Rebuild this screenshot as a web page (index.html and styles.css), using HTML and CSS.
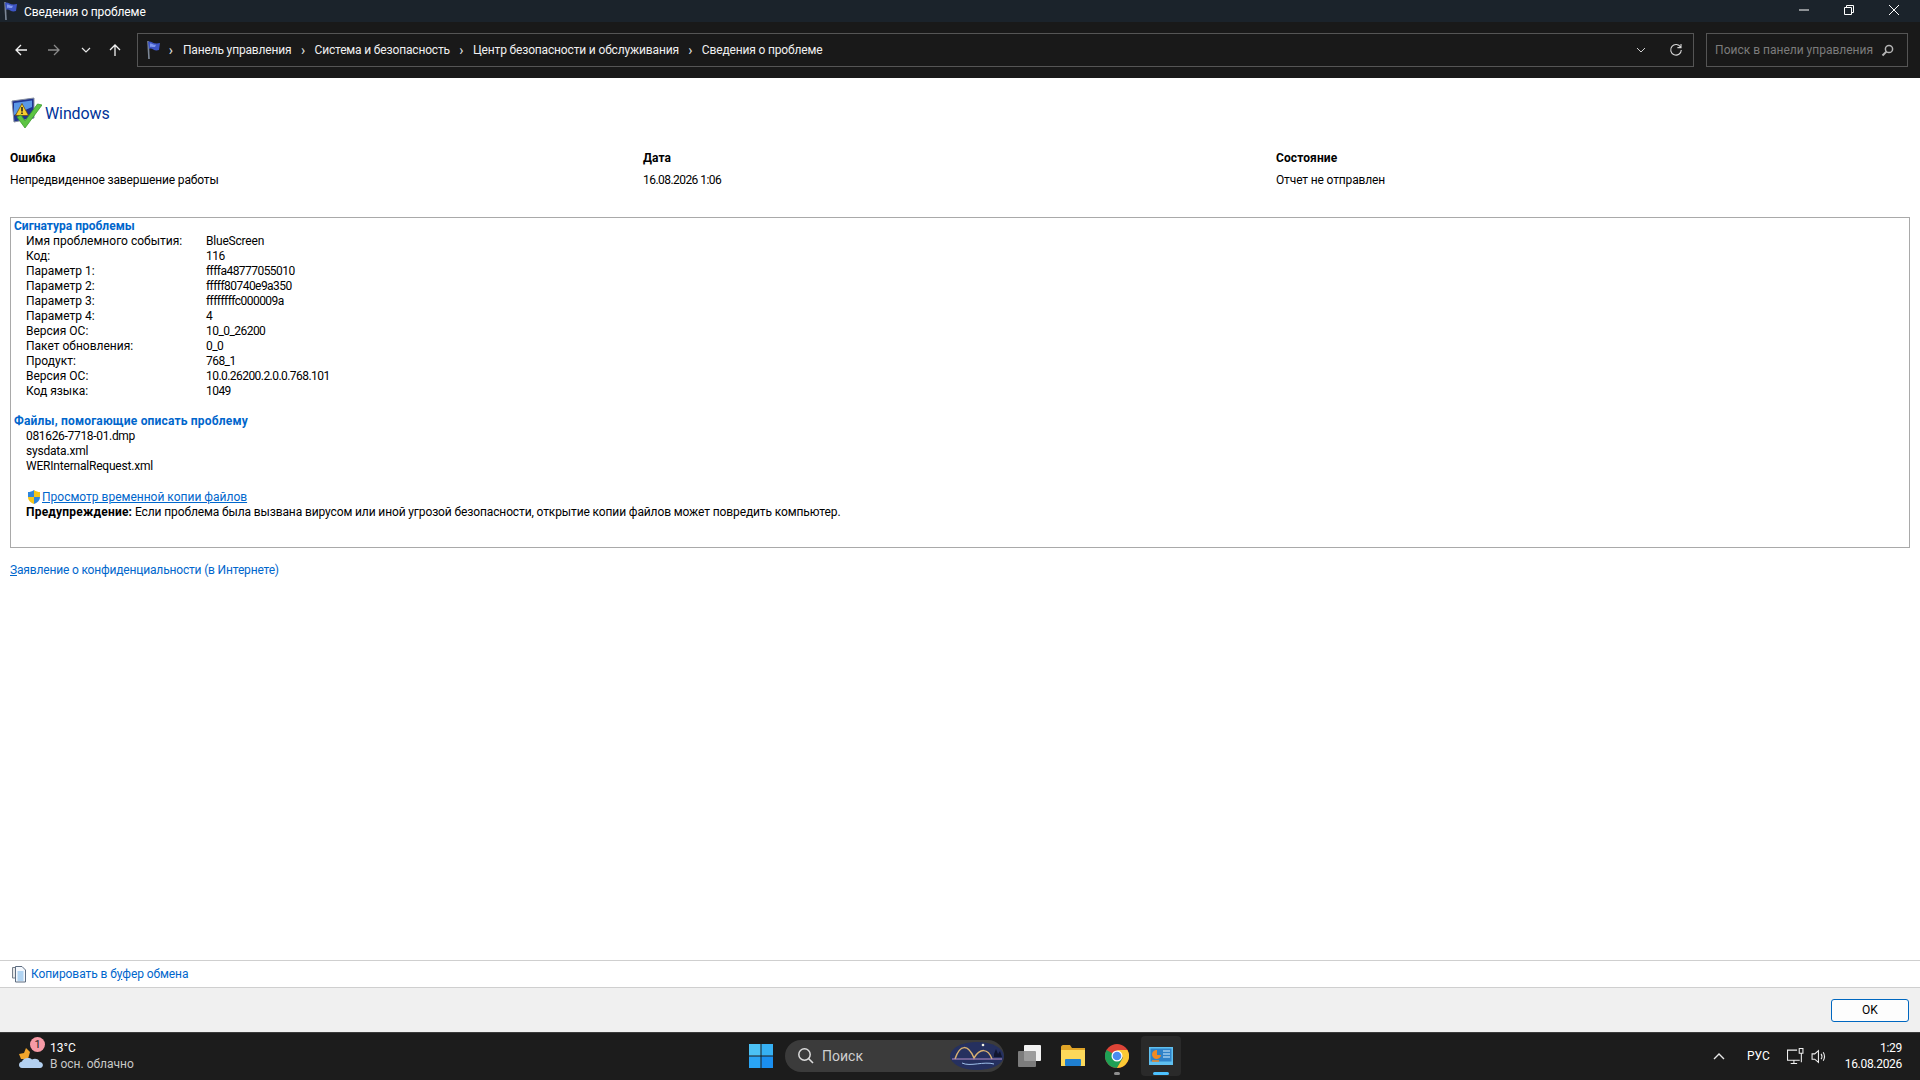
FILE: index.html
```html
<!DOCTYPE html>
<html lang="ru">

<head>
  <meta charset="UTF-8">
  <title>Сведения о проблеме</title>
  <link rel="stylesheet" href="styles.css">
</head>

<body>
  <div class="window">
    <!-- title bar -->
    <div class="titlebar">
      <svg class="flag-sm" width="16" height="20" viewBox="0 0 16 20">
        <path d="M3 1 L4 19" stroke="#7c8796" stroke-width="1.6" fill="none"/>
        <path d="M3 2 C6 0 8 5 15 3 L14 10 C9 12 7 7 4 9 Z" fill="#3d55c4"/>
        <path d="M5 3.500 C7 3 8 5 11 4.800 L10 7 C8 7.500 7 6 5 7 Z" fill="#7f97ee"/>
      </svg>
      <span class="title-text">Сведения о проблеме</span>
      <div class="win-btns">
        <svg width="12" height="12" viewBox="0 0 12 12"><path d="M1 6H11" stroke="#fff" fill="none"/></svg>
        <svg width="12" height="12" viewBox="0 0 12 12"><path d="M1.5 3.5H8.5V10.5H1.5Z M3.5 3.5V1.5H10.5V8.5H8.5" stroke="#fff" fill="none"/></svg>
        <svg width="12" height="12" viewBox="0 0 12 12"><path d="M1 1L11 11M11 1L1 11" stroke="#fff" fill="none"/></svg>
      </div>
    </div>

    <!-- navigation -->
    <div class="navbar">
      <div class="nav-btns">
        <svg width="14" height="14" viewBox="0 0 14 14"><path d="M13 7H2M7 2L2 7L7 12" stroke="#f2f2f2" stroke-width="1.3" fill="none"/></svg>
        <svg class="nav-forward" width="14" height="14" viewBox="0 0 14 14"><path d="M1 7H12M7 2L12 7L7 12" stroke="#8a8a8a" stroke-width="1.3" fill="none"/></svg>
        <svg class="nav-recent" width="10" height="10" viewBox="0 0 10 10"><path d="M1 3L5 7L9 3" stroke="#e6e6e6" stroke-width="1.2" fill="none"/></svg>
        <svg width="14" height="14" viewBox="0 0 14 14"><path d="M7 13V2M2 7L7 2L12 7" stroke="#f2f2f2" stroke-width="1.3" fill="none"/></svg>
      </div>
      <div class="address">
        <svg class="flag-addr" width="16" height="20" viewBox="0 0 16 20">
          <path d="M3 1 L4 19" stroke="#7c8796" stroke-width="1.6" fill="none"/>
          <path d="M3 2 C6 0 8 5 15 3 L14 10 C9 12 7 7 4 9 Z" fill="#3d55c4"/>
          <path d="M5 3.500 C7 3 8 5 11 4.800 L10 7 C8 7.500 7 6 5 7 Z" fill="#7f97ee"/>
        </svg>
        <span class="crumb-sep">›</span>
        <span class="crumb">Панель управления</span>
        <span class="crumb-sep">›</span>
        <span class="crumb">Система и безопасность</span>
        <span class="crumb-sep">›</span>
        <span class="crumb">Центр безопасности и обслуживания</span>
        <span class="crumb-sep">›</span>
        <span class="crumb">Сведения о проблеме</span>
        <div class="address-end">
          <svg width="10" height="10" viewBox="0 0 10 10"><path d="M1 3L5 7L9 3" stroke="#d0d0d0" fill="none"/></svg>
          <svg width="14" height="14" viewBox="0 0 14 14"><path d="M11.6 4.2A5.3 5.3 0 1 0 12.3 7M12 1V4.6H8.4" stroke="#d8d8d8" stroke-width="1.1" fill="none"/></svg>
        </div>
      </div>
      <div class="search-box">
        <span>Поиск в панели управления</span>
        <svg width="13" height="13" viewBox="0 0 13 13"><circle cx="8" cy="5" r="3.6" stroke="#b5b5b5" stroke-width="1.5" fill="none"/><path d="M5.4 7.6L1.5 11.5" stroke="#b5b5b5" stroke-width="2"/></svg>
      </div>
    </div>

    <!-- content -->
    <div class="content">
      <div class="app-head">
        <svg width="32" height="32" viewBox="0 0 32 32">
          <path d="M2 5L24 2L24 22L4 26Z" fill="#1f3390" stroke="#8790a0"/>
          <path d="M4 7L22 4.500L22 11L4 19Z" fill="#5a97e6"/>
          <path d="M12 7.500L18.500 19.500H5.500Z" fill="#f6cf2f" stroke="#6b4e10" stroke-width=".8"/>
          <path d="M12 11V15.500M12 16.500V18" stroke="#222" stroke-width="1.600"/>
          <path d="M7 21L15 32L32 9L27.500 8L15 25L11 19Z" fill="#5cc443" stroke="#3b9a2c" stroke-width=".8"/>
        </svg>
        <span class="app-name">Windows</span>
      </div>

      <div class="summary">
        <div>
          <div class="sum-title">Ошибка</div>
          <div class="sum-value">Непредвиденное завершение работы</div>
        </div>
        <div>
          <div class="sum-title">Дата</div>
          <div class="sum-value num">16.08.2026 1:06</div>
        </div>
        <div>
          <div class="sum-title">Состояние</div>
          <div class="sum-value">Отчет не отправлен</div>
        </div>
      </div>

      <div class="details">
        <div class="det-heading">Сигнатура проблемы</div>
        <div class="det-grid">
          <span>Имя проблемного события:</span><span class="latin">BlueScreen</span>
          <span>Код:</span><span class="num">116</span>
          <span>Параметр 1:</span><span class="num">ffffa48777055010</span>
          <span>Параметр 2:</span><span class="num">fffff80740e9a350</span>
          <span>Параметр 3:</span><span class="num">ffffffffc000009a</span>
          <span>Параметр 4:</span><span class="num">4</span>
          <span>Версия ОС:</span><span class="num">10_0_26200</span>
          <span>Пакет обновления:</span><span class="num">0_0</span>
          <span>Продукт:</span><span class="num">768_1</span>
          <span>Версия ОС:</span><span class="num">10.0.26200.2.0.0.768.101</span>
          <span>Код языка:</span><span class="num">1049</span>
        </div>
        <div class="det-heading det-heading-files">Файлы, помогающие описать проблему</div>
        <div class="file-list">
          <div class="file-dump">081626-7718-01.dmp</div>
          <div class="latin">sysdata.xml</div>
          <div class="latin">WERInternalRequest.xml</div>
        </div>
        <div class="temp-link">
          <svg width="16" height="16" viewBox="0 0 16 16">
            <path d="M8 1C6 2.500 4 3 2 3V8H8Z" fill="#2f86dc"/>
            <path d="M8 1C10 2.500 12 3 14 3V8H8Z" fill="#f5c518"/>
            <path d="M2 8C2 11.500 5 14 8 15V8Z" fill="#f5c518"/>
            <path d="M14 8C14 11.500 11 14 8 15V8Z" fill="#2f86dc"/>
          </svg>
          <a class="link underlined">Просмотр временной копии файлов</a>
        </div>
        <div class="warning"><b>Предупреждение:</b> Если проблема была вызвана вирусом или иной угрозой безопасности, открытие копии файлов может повредить компьютер.</div>
      </div>

      <a class="link privacy"><u>З</u>аявление о конфиденциальности (в Интернете)</a>
    </div>

    <!-- copy + ok -->
    <div class="copy-bar">
      <svg width="16" height="18" viewBox="0 0 16 18">
        <path d="M1.500 2.500H8V13H1.500Z" fill="#e8e8e8" stroke="#77808c"/>
        <path d="M4.500 1.500H11L14.500 5V17H4.500Z" fill="#f4f8fd" stroke="#5d6c80"/>
        <path d="M6.500 7H12.500M6.500 9H12.500M6.500 11H12.500M6.500 13H12.500M6.500 15H12.500" stroke="#6fb0e8"/>
      </svg>
      <a class="link copy-link">Копировать в б<u>у</u>фер обмена</a>
    </div>
    <div class="button-bar">
      <button class="ok-btn">OK</button>
    </div>
  </div>

  <!-- taskbar -->
  <div class="taskbar">
    <div class="tb-left">
      <div class="weather">
        <svg width="26" height="26" viewBox="0 0 26 26">
          <path d="M1 11L6 10L8 5L12 9L10 16H3Z" fill="#f0a52c"/>
          <path d="M4 25C0 25 0 19 4 18.500C5 15 11 14 14 16.500C17 15 21 16 21.500 19C26 19 26 25 22 25Z" fill="#b3d0f0"/>
        </svg>
        <span class="weather-badge">1</span>
      </div>
      <div class="weather-text">
        <div class="temp">13°C</div>
        <div class="cond">В осн. облачно</div>
      </div>
    </div>

    <div class="tb-center">
      <svg class="start" width="24" height="24" viewBox="0 0 24 24">
        <rect x="0" y="0" width="11.500" height="11.500" fill="#4cc2f5"/>
        <rect x="12.500" y="0" width="11.500" height="11.500" fill="#36b0f3"/>
        <rect x="0" y="12.500" width="11.500" height="11.500" fill="#2aa4f4"/>
        <rect x="12.500" y="12.500" width="11.500" height="11.500" fill="#1a8ff0"/>
      </svg>
      <div class="tb-search">
        <svg width="18" height="18" viewBox="0 0 18 18"><circle cx="7.500" cy="7.500" r="5.700" stroke="#dcdcdc" stroke-width="1.500" fill="none"/><path d="M11.500 11.500L16 16" stroke="#dcdcdc" stroke-width="1.600"/></svg>
        <span>Поиск</span>
        <svg class="bing" width="54" height="28" viewBox="0 0 54 28">
          <ellipse cx="27" cy="14" rx="27" ry="14" fill="#25305f"/>
          <path d="M5 17C10 2 18 2 24 16C30 6 38 6 42 17" stroke="#d8b070" stroke-width="1.500" fill="none"/>
          <path d="M2 17H52" stroke="#b790c9"/>
          <path d="M12 21C20 25 34 19 44 22" stroke="#9fc0ea" fill="none"/>
          <circle cx="33" cy="3" r="1.300" fill="#f0f0e0"/>
          <path d="M44 12L46 7L48 12L50 9L52 15H44Z" fill="#10152e"/>
        </svg>
      </div>
      <svg class="tb-icon" width="24" height="24" viewBox="0 0 24 24">
        <rect x="7" y="1" width="17" height="16" rx="1" fill="#f2f2f2"/>
        <rect x="1" y="7" width="18" height="16" rx="1" fill="#8d8d8d" opacity=".85"/>
      </svg>
      <svg class="tb-icon" width="24" height="24" viewBox="0 0 24 24">
        <path d="M0 3C0 2 1 1 2 1H9L11 4H24V22H0Z" fill="#e0a427"/>
        <path d="M0 6H24V22H0Z" fill="#fbd85a"/>
        <rect x="4" y="15" width="16" height="7" rx="1" fill="#1f7fd0"/>
      </svg>
      <div class="tb-chrome">
        <svg class="tb-icon" width="24" height="24" viewBox="0 0 24 24">
          <circle cx="12" cy="12" r="12" fill="#dd4437"/>
          <path d="M12 12L1.600 6A12 12 0 0 0 12 24L18 13.800Z" fill="#1fa055"/>
          <path d="M12 6H22.400A12 12 0 0 1 12 24L18 13.800Z" fill="#fcc934"/>
          <circle cx="12" cy="12" r="5.500" fill="#fff"/>
          <circle cx="12" cy="12" r="4.300" fill="#4a8cf0"/>
        </svg>
        <span class="tb-dot"></span>
      </div>
      <div class="tb-active">
        <svg width="24" height="20" viewBox="0 0 24 20">
          <rect x="0" y="1" width="24" height="18" fill="#5fc0f0"/>
          <rect x="1.500" y="2.500" width="21" height="13" fill="#2f82c8"/>
          <path d="M8 4A4.500 4.500 0 1 0 12 9H8Z" fill="#f08a24"/>
          <path d="M3 15H10" stroke="#f08a24" stroke-width="1.500"/>
          <path d="M14 5H21M14 8H21M14 11H21" stroke="#d8f0ff"/>
        </svg>
        <span class="tb-bar"></span>
      </div>
    </div>

    <div class="tb-right">
      <svg width="12" height="8" viewBox="0 0 12 8"><path d="M1 7L6 2L11 7" stroke="#e8e8e8" stroke-width="1.400" fill="none"/></svg>
      <span class="lang">РУС</span>
      <div class="tray">
        <svg width="16" height="16" viewBox="0 0 16 16"><path d="M9.500 2H.5V11.500H12M3.500 14.500H9.500M6.500 11.500V14.500M13.500 5V13.500M11.500.5H15V5H11.500Z" stroke="#efefef" fill="none"/></svg>
        <svg width="16" height="16" viewBox="0 0 16 16"><path d="M1 5.500H3.500L7 2.500V13.500L3.500 10.500H1ZM9.500 5.500C10.500 7 10.500 9 9.500 10.500M11.500 4C13 6.500 13 9.500 11.500 12" stroke="#efefef" fill="none"/></svg>
      </div>
      <div class="clock">
        <div>1:29</div>
        <div>16.08.2026</div>
      </div>
    </div>
  </div>
</body>

</html>
```
FILE: styles.css
```css
html, body {
  margin: 0;
  height: 1080px;
  overflow: hidden;
}

body {
  display: flex;
  flex-direction: column;
  font-family: 'Roboto', 'Liberation Sans', sans-serif;
  font-size: 12px;
  color: #000;
  background-color: #fff;
}

.window {
  flex: 1;
  display: flex;
  flex-direction: column;
  min-height: 0;
}

/* digits are wider in this font than in the original one */
.num {
  letter-spacing: -0.55px;
}

.latin {
  letter-spacing: -0.2px;
}

/* title bar */
.titlebar {
  height: 22px;
  display: flex;
  align-items: center;
  background-color: #1b232b;
  color: #fff;
}

.flag-sm {
  margin-left: 2px;
}

.title-text {
  margin-left: 6px;
  margin-top: 2px;
  letter-spacing: -0.1px;
}

.win-btns {
  margin-left: auto;
  display: flex;
  gap: 33px;
  padding-right: 20px;
  margin-top: -3px;
}

/* nav */
.navbar {
  height: 56px;
  display: flex;
  align-items: center;
  background-color: #191919;
  color: #f0f0f0;
  padding-right: 12px;
}

.nav-btns {
  width: 137px;
  display: flex;
  align-items: center;
  justify-content: space-between;
  padding: 0 15px 0 14px;
  box-sizing: border-box;
}

.nav-forward {
  margin-left: 2px;
}

.nav-recent {
  margin-left: 2px;
}

.address {
  width: 1558px;
  height: 34px;
  box-sizing: border-box;
  border: 1px solid #555;
  display: flex;
  align-items: center;
  padding-left: 7px;
}

.flag-addr {
  margin-right: 6px;
}

.crumb {
  letter-spacing: -0.16px;
}

.crumb-sep {
  width: 23px;
  text-align: center;
  font-size: 14px;
  color: #e0e0e0;
}

.crumb-sep:first-of-type {
  width: 8px;
  margin-right: 8px;
}

.address-end {
  margin-left: auto;
  display: flex;
  align-items: center;
  gap: 23px;
  padding-right: 10px;
}

.search-box {
  width: 202px;
  height: 34px;
  margin-left: 12px;
  box-sizing: border-box;
  border: 1px solid #555;
  display: flex;
  align-items: center;
  justify-content: space-between;
  padding: 0 13px 0 8px;
  color: #7c7c7c;
}

/* main */
.content {
  flex: 1;
  padding: 18px 10px 0;
}

.app-head {
  display: flex;
  align-items: center;
  height: 32px;
}

.app-name {
  margin-left: 3px;
  margin-top: 2px;
  font-size: 16px;
  color: #003399;
  letter-spacing: -0.1px;
}

.summary {
  display: grid;
  grid-template-columns: 633px 633px 1fr;
  margin-top: 22px;
}

.sum-title {
  font-weight: 700;
  line-height: 16px;
  letter-spacing: 0.1px;
}

.sum-value {
  margin-top: 6px;
  line-height: 16px;
  letter-spacing: -0.14px;
}

.sum-value.num {
  letter-spacing: -0.55px;
}

.details {
  margin-top: 29px;
  height: 331px;
  box-sizing: border-box;
  border: 1px solid #a9a9a9;
  padding: 1px 0 0 3px;
}

.det-heading {
  font-weight: 700;
  color: #0066cc;
  line-height: 15px;
}

.det-heading-files {
  margin-top: 15px;
  letter-spacing: 0.18px;
}

.det-grid {
  display: grid;
  grid-template-columns: 180px 1fr;
  grid-auto-rows: 15px;
  line-height: 15px;
  padding-left: 12px;
}

.file-list {
  padding-left: 12px;
  line-height: 15px;
}

.file-dump {
  letter-spacing: -0.32px;
}

.temp-link {
  display: flex;
  align-items: center;
  height: 15px;
  margin-top: 16px;
  padding-left: 12px;
  line-height: 15px;
}

.temp-link svg {
  flex-shrink: 0;
  margin-top: -2px;
}

.warning {
  padding-left: 12px;
  line-height: 15px;
  letter-spacing: -0.12px;
}

.warning b {
  letter-spacing: 0.2px;
}

.link {
  color: #0066cc;
}

.underlined {
  text-decoration: underline;
}

.privacy {
  display: block;
  margin-top: 14px;
  line-height: 16px;
  letter-spacing: -0.17px;
}

/* bottom bars */
.copy-bar {
  height: 26px;
  display: flex;
  align-items: center;
  gap: 4px;
  padding-left: 11px;
  border-top: 1px solid #cfcfcf;
  border-bottom: 1px solid #cfcfcf;
}

.copy-link {
  letter-spacing: -0.08px;
}

.button-bar {
  height: 44px;
  display: flex;
  align-items: center;
  justify-content: flex-end;
  padding-right: 11px;
  background-color: #f0f0f0;
}

.ok-btn {
  width: 78px;
  height: 23px;
  box-sizing: border-box;
  background-color: #fdfdfd;
  border: 1px solid #0067c0;
  border-radius: 3px;
  font: 12px 'Roboto', sans-serif;
  color: #000;
  padding: 0;
}

/* taskbar */
.taskbar {
  height: 48px;
  display: grid;
  grid-template-columns: 1fr auto 1fr;
  align-items: center;
  background-color: #1c1c1c;
  border-top: 1px solid #3a3a3a;
  box-sizing: border-box;
  color: #fff;
}

.tb-left {
  display: flex;
  align-items: center;
  padding-left: 18px;
  margin-top: -1px;
}

.weather {
  position: relative;
  width: 32px;
  height: 26px;
}

.weather-badge {
  position: absolute;
  top: -6px;
  left: 12px;
  width: 15px;
  height: 15px;
  border-radius: 50%;
  background-color: #f79aa6;
  color: #222;
  font-size: 11px;
  line-height: 15px;
  text-align: center;
}

.weather-text {
  margin-left: 0;
  line-height: 16px;
}

.cond {
  color: #c8c8c8;
}

.tb-center {
  display: flex;
  align-items: center;
  padding-left: 10px;
  margin-top: -1px;
}

.start {
  display: block;
}

.tb-search {
  width: 219px;
  height: 32px;
  margin-left: 12px;
  box-sizing: border-box;
  display: flex;
  align-items: center;
  padding: 0 0 0 12px;
  border-radius: 16px;
  background-color: #3b3b3b;
  color: #cfcfcf;
  font-size: 14px;
}

.tb-search span {
  margin-left: 7px;
}

.bing {
  margin-left: auto;
}

.tb-icon {
  display: block;
}

.tb-search + .tb-icon {
  margin-left: 13px;
}

.tb-search + .tb-icon + .tb-icon {
  margin-left: 20px;
}

.tb-chrome {
  position: relative;
  margin-left: 20px;
}

.tb-dot {
  position: absolute;
  left: 9px;
  bottom: -7px;
  width: 6px;
  height: 3px;
  border-radius: 2px;
  background-color: #8e8e8e;
}

.tb-active {
  position: relative;
  width: 40px;
  height: 40px;
  margin-left: 12px;
  display: flex;
  align-items: center;
  justify-content: center;
  border-radius: 4px;
  background-color: #2a2a2a;
}

.tb-bar {
  position: absolute;
  left: 12px;
  bottom: 1px;
  width: 16px;
  height: 3px;
  border-radius: 2px;
  background-color: #4cc2ff;
}

.tb-right {
  display: flex;
  align-items: center;
  justify-content: flex-end;
  padding-right: 18px;
  margin-top: -1px;
}

.lang {
  margin-left: 22px;
}

.tray {
  display: flex;
  align-items: center;
  gap: 7px;
  margin-left: 17px;
}

.tray svg {
  width: 17px;
  height: 17px;
}

.clock {
  margin-left: 17px;
  text-align: right;
  line-height: 16px;
  letter-spacing: -0.3px;
}
```
